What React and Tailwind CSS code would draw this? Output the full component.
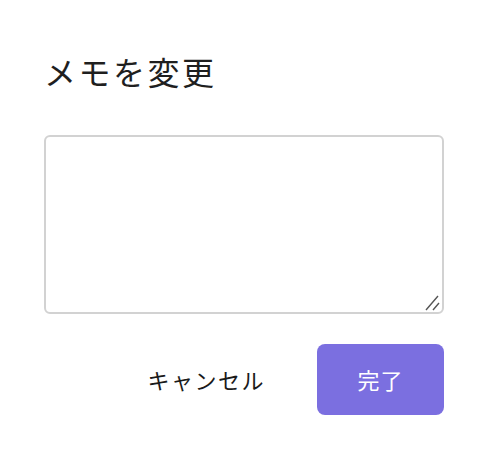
import React, { useState } from "react";

export default function App() {
  const [memo, setMemo] = useState("");

  return (
    <div
      className="min-h-screen bg-white px-11 pt-[47px] text-[#1f1f1f]"
      style={{ fontFamily: '"Noto Sans CJK JP", "Noto Sans", sans-serif' }}
    >
      <h2 className="text-[32px] leading-[48px] font-normal tracking-[2.5px]">メモを変更</h2>
      <div className="relative mt-10">
        <textarea
          value={memo}
          onChange={(e) => setMemo(e.target.value)}
          className="block h-[179px] w-full resize-none rounded-md border-2 border-[#d2d2d2] bg-white p-3 text-[18px] outline-none"
        />
        {/* resize grip */}
        <svg
          className="pointer-events-none absolute right-[4px] bottom-[3px]"
          width="16"
          height="16"
          viewBox="0 0 16 16"
        >
          <path d="M14 1L2 15M15 8L9 15" stroke="#555" strokeWidth="1.4" fill="none" />
        </svg>
      </div>
      <div className="mt-[30px] flex items-center justify-end gap-7">
        <button className="h-[71px] px-6 text-[22px] tracking-[1.5px] text-[#1a1a1a]">
          キャンセル
        </button>
        <button className="h-[71px] w-[127px] rounded-lg bg-[#7b6fe0] text-[22px] tracking-[1px] text-white">
          完了
        </button>
      </div>
    </div>
  );
}
